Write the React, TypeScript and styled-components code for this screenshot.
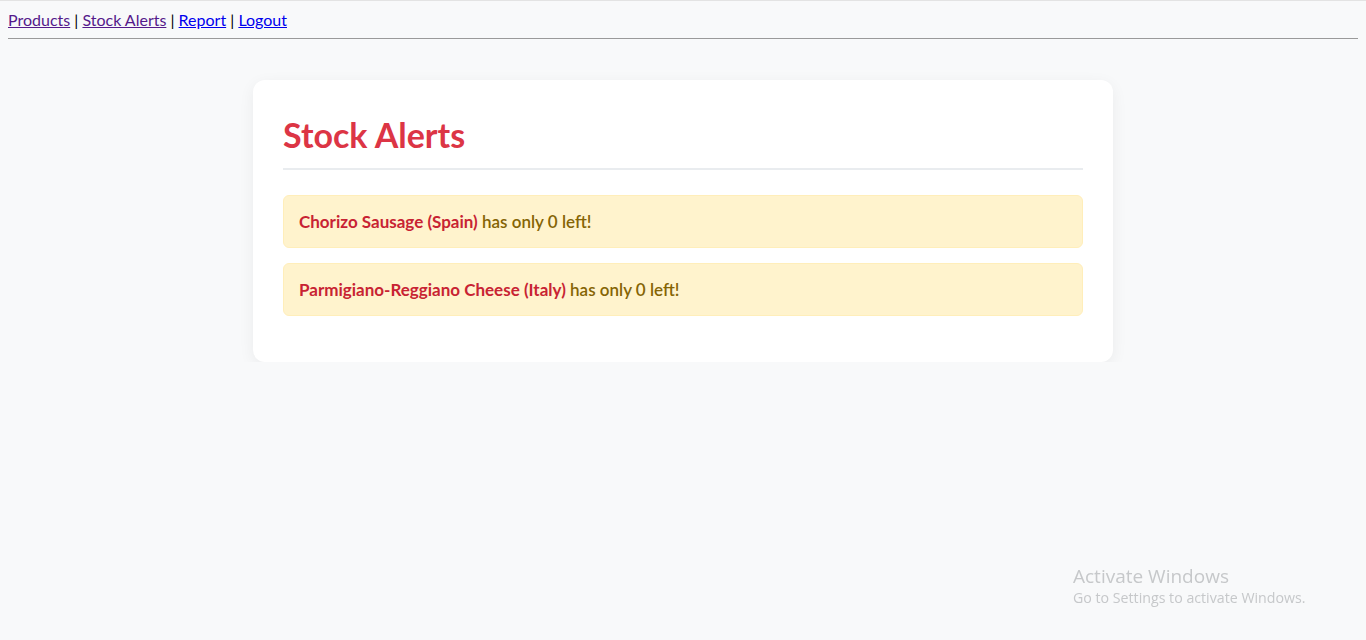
import React from "react";
import styled, { createGlobalStyle } from "styled-components";

const Global = createGlobalStyle`
  html { border-top: 1px solid #e3e3e3; background: #f8f9fa; }
  body {
    margin: 8px;
    background: #f8f9fa;
    font-family: "Segoe UI", Lato, "Noto Sans", sans-serif;
    color: #000;
  }
`;

const Nav = styled.nav`
  font-size: 16px;
  line-height: 21px;
`;

const NavLink = styled.a<{ $visited?: boolean }>`
  color: ${(p) => (p.$visited ? "#551a8b" : "#0000ee")};
  text-decoration: underline;
`;

const Rule = styled.hr`
  margin: 8px 0 0;
  border: none;
  border-top: 1px solid #9a9a9a;
  height: 0;
`;

const Card = styled.section`
  width: 800px;
  margin: 41px auto 0;
  padding: 30px;
  background: #fff;
  border-radius: 12px;
  box-shadow: 0 4px 16px rgba(0, 0, 0, 0.06);
`;

const Title = styled.h2`
  margin: 0 0 25px;
  padding: 7px 0 15px;
  font-size: 34px;
  line-height: 36px;
  font-weight: 700;
  color: #dc3545;
  border-bottom: 2px solid #e9ecef;
`;

const AlertList = styled.div`
  display: flex;
  flex-direction: column;
  gap: 15px;
  padding-bottom: 16px;
`;

const Alert = styled.div`
  background: #fff3cd;
  border: 1px solid #ffeeba;
  border-radius: 6px;
  padding: 15px;
  font-size: 17px;
  line-height: 21px;
  font-weight: 600;
  color: #856404;
`;

const Product = styled.strong`
  color: #c82333;
  font-weight: 700;
`;

const Watermark = styled.div`
  position: fixed;
  left: 1073px;
  top: 564px;
  color: #c6c8ca;
  font-family: "Segoe UI", "Open Sans", sans-serif;
`;

const WmTitle = styled.div`
  font-size: 19px;
  line-height: 24px;
`;

const WmSub = styled.div`
  font-size: 14.2px;
  line-height: 20px;
`;

const alerts = [
  { name: "Chorizo Sausage (Spain)", qty: 0 },
  { name: "Parmigiano-Reggiano Cheese (Italy)", qty: 0 },
];

export default function App() {
  return (
    <>
      <Global />
      <Nav>
        <NavLink href="#" $visited>Products</NavLink> |{" "}
        <NavLink href="#" $visited>Stock Alerts</NavLink> |{" "}
        <NavLink href="#">Report</NavLink> |{" "}
        <NavLink href="#">Logout</NavLink>
      </Nav>
      <Rule />
      <Card>
        <Title>Stock Alerts</Title>
        <AlertList>
          {alerts.map((a) => (
            <Alert key={a.name}>
              <Product>{a.name}</Product> has only {a.qty} left!
            </Alert>
          ))}
        </AlertList>
      </Card>
      <Watermark>
        <WmTitle>Activate Windows</WmTitle>
        <WmSub>Go to Settings to activate Windows.</WmSub>
      </Watermark>
    </>
  );
}
